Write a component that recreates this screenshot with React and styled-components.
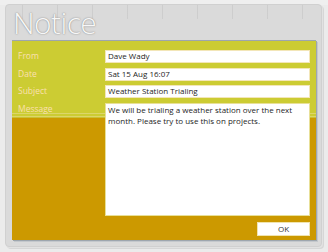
import React from "react";
import styled, { createGlobalStyle } from "styled-components";

const GlobalStyle = createGlobalStyle`
  html, body {
    margin: 0;
    padding: 0;
    background: #ebebeb;
  }
  * {
    box-sizing: border-box;
  }
`;

const fields = [
  { label: "From", value: "Dave Wady" },
  { label: "Date", value: "Sat 15 Aug 16:07" },
  { label: "Subject", value: "Weather Station Trialing" },
];

const message =
  "We will be trialing a weather station over the next month. Please try to use this on projects.";

const App = () => {
  return (
    <>
      <GlobalStyle />
      <Page>
        <Frame>
          <Title>Notice</Title>
          <Panel>
            <Form>
              {fields.map((f) => (
                <React.Fragment key={f.label}>
                  <Label>{f.label}</Label>
                  <Field>{f.value}</Field>
                </React.Fragment>
              ))}
              <Label>Message</Label>
              <MessageBox readOnly defaultValue={message} />
            </Form>
            <Footer>
              <OkButton>OK</OkButton>
            </Footer>
          </Panel>
        </Frame>
      </Page>
    </>
  );
};

export default App;

const Page = styled.div`
  width: 328px;
  height: 252px;
  padding: 4px 6px 5px 5px;
  background: linear-gradient(to bottom, #efefef 0 5px, #ebebeb 5px);
`;

const Frame = styled.div`
  height: 100%;
  display: flex;
  flex-direction: column;
  padding: 0 5px 7px 6px;
  border-radius: 4px;
  border: 1px solid #d0d0d0;
  background-color: #dadada;
  background-image: repeating-linear-gradient(
    to right,
    transparent 0 16px,
    rgba(0, 0, 0, 0.06) 16px 17px,
    transparent 17px 35px
  );
  background-size: 100% 14px;
  background-repeat: no-repeat;
  box-shadow: 1px 1px 0 #e2e2e2, 2px 2px 0 #d6d6d6;
`;

const Title = styled.div`
  height: 35px;
  padding-left: 1px;
  font-family: "Open Sans", "Noto Sans", sans-serif;
  font-weight: 300;
  font-size: 30px;
  line-height: 36px;
  letter-spacing: -0.6px;
  color: #f7f7f7;
  text-shadow: 0 0 1px #8e8e8e, 0 0 2px #a8a8a8;
`;

const Panel = styled.div`
  flex: 1;
  display: flex;
  flex-direction: column;
  padding: 9px 6px 4px 6px;
  border-top: 1px solid #9ea6ae;
  background: linear-gradient(
    to bottom,
    #cccc33 0 72px,
    #dcd66a 72px 73px,
    #cccc33 73px 75px,
    #dcd66a 75px 76px,
    #c9c232 76px 77px,
    #cc9900 77px
  );
  box-shadow: 1px 1px 0 #9ea6ae, 2px 2px 0 #c4c8cc;
`;

const Form = styled.div`
  display: grid;
  grid-template-columns: 87px 1fr;
  row-gap: 4.6px;
`;

const Label = styled.div`
  font-family: "Open Sans", "Noto Sans", sans-serif;
  font-size: 8.5px;
  line-height: 12px;
  color: #fbe0b0;
`;

const Field = styled.div`
  height: 13px;
  padding: 0 2px;
  background: #ffffff;
  border: 1px solid #f3e6b8;
  font-family: "Open Sans", "Noto Sans", sans-serif;
  font-size: 8px;
  line-height: 10px;
  color: #1e1e1e;
  white-space: nowrap;
  overflow: hidden;
`;

const MessageBox = styled.textarea`
  height: 113px;
  padding: 0 2px;
  margin: 0;
  resize: none;
  background: #ffffff;
  border: 1px solid #e8e098;
  outline: none;
  font-family: "Open Sans", "Noto Sans", sans-serif;
  font-size: 8px;
  line-height: 11px;
  color: #1e1e1e;
  overflow: hidden;
`;

const Footer = styled.div`
  display: flex;
  justify-content: flex-end;
  margin-top: 6px;
`;

const OkButton = styled.button`
  width: 53px;
  height: 14px;
  padding: 0;
  background: #ffffff;
  border: 1px solid #f0e4b0;
  font-family: "Open Sans", "Noto Sans", sans-serif;
  font-size: 8px;
  line-height: 12px;
  color: #333;
`;
